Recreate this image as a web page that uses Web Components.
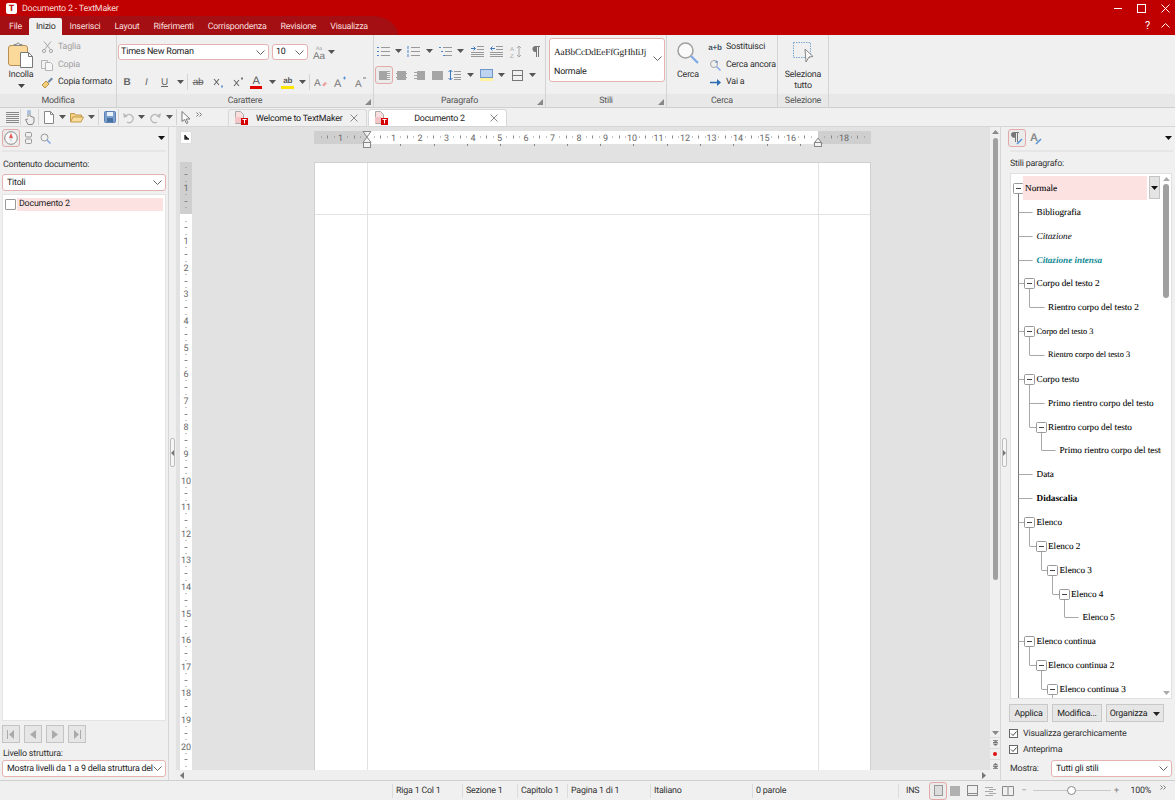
<!doctype html>
<html lang="it">
<head>
<meta charset="utf-8">
<title>Documento 2 - TextMaker</title>
<style>
  html, body { margin: 0; height: 100%; overflow: hidden; background: #f0f0f0; }
  tm-app { font-family: Roboto, "Liberation Sans", sans-serif; font-size: 8.900px; letter-spacing: -.2px; color: #333; text-rendering: geometricPrecision; }
</style>
</head>
<body>
<tm-app></tm-app>
<script>
const svg = (w, h, body, vb) => `<svg width="${w}" height="${h}" viewBox="${vb || `0 0 ${w} ${h}`}" fill="none" style="flex:none;display:block;overflow:visible">${body}</svg>`;
const drop = `<svg width="7" height="4" viewBox="0 0 7 4" style="flex:none;display:block"><path d="M0 0h7L3.500 4z" fill="#555"/></svg>`;
const lines = (x, ys, w, c) => ys.map(y => `<path d="M${x} ${y}.5h${w}" stroke="${c}"/>`).join("");
const dots = (x, ys, c) => ys.map(y => `<path d="M${x} ${y}.5h2" stroke="${c}"/>`).join("");

const ICON = {
  paste: svg(27, 26, `<rect x=".5" y="3.500" width="19" height="20" rx="2.500" fill="#fbd99a" stroke="#b98f55"/><path d="M6 3.500h8v-1h-2.500a1.500 1.500 0 0 0-3 0H6z" fill="#eee" stroke="#888"/><path d="M12.500 10.500h8l4 4v11h-12z" fill="#fff" stroke="#777"/><path d="M20.500 10.500v4h4" stroke="#777"/>`),
  cut: svg(11, 12, `<path d="M2 .5l6.500 8M9 .5L2.500 8.500" stroke="#a5a5a5"/><circle cx="2" cy="10" r="1.600" stroke="#a5a5a5"/><circle cx="9" cy="10" r="1.600" stroke="#a5a5a5"/>`),
  copy: svg(12, 12, `<path d="M.5 1.500h6v8h-6z" fill="#f2f2f2" stroke="#b5b5b5"/><path d="M4.500 3.500h5l2 2v6h-7z" fill="#f7f7f7" stroke="#b5b5b5"/>`),
  brush: svg(13, 13, `<path d="M1 9l4-4 3 3-4 4z" fill="#f3cf75" stroke="#b9914a"/><path d="M6.500 5.500l4-4 1.500 1.500-4 4z" fill="#6d88a8"/>`),
  case: svg(15, 15, `<text x="3" y="4.500" font-family="Liberation Sans" font-size="5" fill="#999">Aa</text><text x="0" y="14" font-family="Liberation Sans" font-size="10" fill="#777">Aa</text>`),
  sub: svg(12, 12, `<path d="M1 3l5 6M6 3L1 9" stroke="#666" stroke-width="1.100"/><path d="M8 9.500h2v2H8z" fill="#6d9ad0"/>`),
  sup: svg(12, 12, `<path d="M1 4l5 6M6 4L1 10" stroke="#666" stroke-width="1.100"/><path d="M8 1.500h2v2H8z" fill="#777"/>`),
  clear: svg(14, 12, `<text x="0" y="10" font-family="Liberation Sans" font-size="10" fill="#777">A</text><path d="M8 9l3-3 2 1.500-3 3z" fill="#eea0a0"/>`),
  grow: svg(13, 12, `<text x="0" y="11" font-family="Liberation Sans" font-size="11" fill="#777">A</text><path d="M9 2h3" stroke="#5a94d6"/><path d="M10.500.5v3" stroke="#5a94d6"/>`),
  shrink: svg(13, 12, `<text x="1" y="11" font-family="Liberation Sans" font-size="10" fill="#777">A</text><path d="M9 2h3" stroke="#777"/>`),
  bullets: svg(13, 11, dots(0, [1, 5, 9], "#4a86cc") + lines(4, [1, 5, 9], 9, "#999")),
  numbers: svg(13, 11, `<path d="M1 0v3M1 4v3M1 8v3" stroke="#4a86cc"/>` + lines(4, [1, 5, 9], 9, "#999")),
  multi: svg(13, 11, dots(0, [1], "#4a86cc") + dots(2, [5], "#4a86cc") + dots(4, [9], "#4a86cc") + lines(4, [1], 9, "#999") + lines(6, [5, 9], 7, "#999")),
  indent: svg(13, 11, `<path d="M0 2.500h4M2.500 .5l2 2-2 2" stroke="#3c78bf"/>` + lines(6, [0, 3], 7, "#999") + lines(0, [6, 8, 10], 13, "#999")),
  outdent: svg(13, 11, `<path d="M5 2.500H1M2.500 .5l-2 2 2 2" stroke="#3c78bf"/>` + lines(6, [0, 3], 7, "#999") + lines(0, [6, 8, 10], 13, "#999")),
  sort: svg(12, 13, `<text x="0" y="6" font-family="Liberation Sans" font-size="6" fill="#aaa">A</text><text x="0" y="13" font-family="Liberation Sans" font-size="6" fill="#aaa">Z</text><path d="M9 1v11M7 3l2-2 2 2M7 10l2 2 2-2" stroke="#aaa"/>`),
  pilcrow: svg(8, 11, `<path d="M3 0h5v1H7v10H6V1H5v10H4V6a3 3 0 0 1-1-6z" fill="#777"/>`),
  left: svg(11, 9, `<rect width="11" height="9" fill="#a5a5a5"/>` + lines(8, [1, 3, 5, 7], 3, "#ececec")),
  center: svg(11, 9, `<rect x="1" width="9" height="9" fill="#a5a5a5"/>` + lines(0, [2, 6], 11, "#a5a5a5")),
  right: svg(11, 9, `<rect x="3" width="8" height="9" fill="#a5a5a5"/>` + lines(0, [1, 4, 7], 4, "#a5a5a5")),
  justify: svg(11, 9, `<rect width="11" height="9" fill="#a5a5a5"/>`),
  spacing: svg(13, 12, `<path d="M2.500 1v10M.5 3l2-2 2 2M.5 9l2 2 2-2" stroke="#3c78bf"/>` + lines(6, [2, 5, 8, 10], 7, "#999")),
  shade: svg(13, 12, `<rect x=".5" y=".5" width="12" height="8" fill="#bcd4f0" stroke="#6e96c8"/><rect y="9" width="13" height="3" fill="#fff3a0"/>`),
  border: svg(11, 11, `<rect x=".5" y=".5" width="10" height="10" stroke="#777"/><path d="M0 5.500h11" stroke="#777"/>`),
  search: svg(22, 22, `<circle cx="8.500" cy="8.500" r="7.500" fill="#fafafa" stroke="#a0a0a0" stroke-width="1.500"/><path d="M14 14l7 7" stroke="#7ea9e6" stroke-width="2.200"/>`),
  again: svg(12, 12, `<circle cx="5" cy="5" r="3.500" stroke="#a5a5a5"/><path d="M7.500 7.500l4 4" stroke="#7ea9e6" stroke-width="1.500"/><path d="M7 1.500l1.500 1.500-2 .5" stroke="#4a86cc"/>`),
  goto: svg(11, 7, `<path d="M0 3.500h8" stroke="#2d6db3" stroke-width="1.500"/><path d="M7 0l4 3.500L7 7z" fill="#2d6db3"/>`),
  selectAll: svg(21, 22, `<rect x=".5" y=".5" width="17" height="15" stroke="#7fa7d4" stroke-dasharray="1.500 1"/><path d="M12 7l8 7.500-4 .5-3 5z" fill="#f6f6f6" stroke="#888"/>`),
  menu: svg(13, 11, lines(0, [0, 2, 4, 6, 8, 10], 13, "#888")),
  hand: svg(12, 15, `<path d="M4 7V2a1 1 0 0 1 2 0v4l4 1.500V12l-1.500 2.500H4L1.500 9.500 4 9" fill="#eee" stroke="#888"/><path d="M3 0h4v4H3z" fill="#a9c5ea" opacity=".8"/>`),
  doc: svg(10, 13, `<path d="M.5.5h6l3 3v9h-9z" fill="#fff" stroke="#888"/><path d="M6.500.5v3h3" stroke="#888"/>`),
  open: svg(14, 12, `<path d="M.5 11V2.500h4l1 1.500h6v2" fill="#f6cf80" stroke="#c29a4e"/><path d="M.5 11l2.500-5h10.500l-2.500 5z" fill="#f9dc9c" stroke="#c29a4e"/>`),
  save: svg(12, 12, `<rect x=".5" y=".5" width="11" height="11" rx="1" fill="#7d9fd0" stroke="#5a82b5"/><rect x="3" y="1" width="6" height="4" fill="#e8f0fa"/><rect x="3" y="7" width="6" height="4" fill="#46709f"/>`),
  undo: svg(11, 12, `<path d="M3 5a4 4 0 1 1 1 6" stroke="#b9b9b9" stroke-width="1.300"/><path d="M0 2l1 5 4-2z" fill="#b9b9b9"/>`),
  redo: svg(11, 12, `<path d="M8 5a4 4 0 1 0-1 6" stroke="#b9b9b9" stroke-width="1.300"/><path d="M11 2l-1 5-4-2z" fill="#b9b9b9"/>`),
  cursor: svg(10, 13, `<path d="M1 .5v10l2.500-2 2 4 1.500-.8-2-3.700H9z" fill="#fff" stroke="#777"/>`),
  more: svg(6, 5, `<path d="M.5.5l2 2-2 2M3.500.5l2 2-2 2" stroke="#777"/>`),
  tmdoc: svg(14, 14, `<path d="M.5.5h5l3 3v9h-8z" fill="#fbdede" stroke="#aaa"/><rect x="0" y="6" width="6" height="6" fill="#f6c4c4"/><rect x="6" y="7" width="7" height="7" fill="#d40000"/><path d="M7.500 8.500h4M9.500 8.500v4" stroke="#fff"/>`),
  close: svg(8, 8, `<path d="M.5.5l7 7M7.500.5l-7 7" stroke="#888"/>`),
  compass: svg(14, 14, `<circle cx="7" cy="7" r="6.300" stroke="#888" fill="#f8f8f8"/><path d="M7 2l2 5H5z" fill="#e25a5a"/><path d="M7 12l2-5H5z" fill="#ddd"/>`),
  panes: svg(7, 12, `<rect x=".5" y=".5" width="6" height="4.500" rx="1" stroke="#999"/><rect x=".5" y="7" width="6" height="4.500" rx="1" stroke="#999"/>`),
  lens: svg(11, 11, `<circle cx="4.500" cy="4.500" r="3.500" stroke="#999"/><path d="M7 7l3.500 3.500" stroke="#7ea9e6" stroke-width="1.500"/>`),
  parastyle: svg(12, 14, `<path d="M2 1h6v1H7v9H6V2H5v9H4V6.500A2.800 2.800 0 0 1 2 1z" fill="#777"/><path d="M6 13l5-5" stroke="#5a94d6" stroke-width="1.600"/>`),
  charstyle: svg(12, 14, `<text x="0" y="10" font-family="Liberation Sans" font-weight="700" font-size="11" fill="#888">A</text><path d="M6 13l5-5" stroke="#5a94d6" stroke-width="1.600"/>`),
  viewNormal: svg(9, 11, `<rect x=".5" y=".5" width="8" height="10" fill="#dcdcdc" stroke="#999"/>`),
  viewFull: svg(10, 10, `<rect width="10" height="10" fill="#b0b0b0"/>`),
  viewWeb: svg(11, 11, `<rect x=".5" y=".5" width="10" height="10" stroke="#888"/><path d="M0 8.500h11" stroke="#888"/>`),
  viewOutline: svg(11, 10, lines(0, [1, 5, 9], 8, "#aaa") + lines(4, [3, 7], 7, "#aaa")),
  viewBook: svg(12, 10, `<path d="M.5.5h5l.5 1 .5-1h5v9h-5l-.5.500-.5-.500h-5z" stroke="#888"/><path d="M6 1.500v8" stroke="#888"/>`),
  first: svg(8, 9, `<path d="M.5 0v9" stroke="#aaa"/><path d="M7 0v9L2 4.500z" fill="#aaa"/>`),
  prev: svg(6, 9, `<path d="M6 0v9L0 4.500z" fill="#aaa"/>`),
  next: svg(6, 9, `<path d="M0 0v9l6-4.500z" fill="#aaa"/>`),
  last: svg(8, 9, `<path d="M7.500 0v9" stroke="#aaa"/><path d="M1 0v9l5-4.500z" fill="#aaa"/>`),
  chevron: svg(9, 5, `<path d="M.5.5l4 4 4-4" stroke="#666"/>`),
};

// row of cells centred on page x positions, in flow
function cells(originX, items) {
  const cs = items.map(i => i[0]);
  let out = "";
  const firstHalf = cs.length > 1 ? (cs[1] - cs[0]) / 2 : 8;
  let left = cs[0] - firstHalf;
  const ml = left - originX;
  items.forEach((it, i) => {
    const right = i < cs.length - 1 ? (cs[i] + cs[i + 1]) / 2 : cs[i] + (cs[i] - left);
    const w = right - left;
    out += `<span class="cell ${it[2] || ""}" style="width:${w}px;${i == 0 ? `margin-left:${ml}px` : ""}">${it[1]}</span>`;
    left = right;
  });
  return out;
}
const SEP = `<i class="sep"></i>`;
const CELL_CSS = `
  .cell { flex: none; display: flex; align-items: center; justify-content: center; height: 100%; position: relative; }
  .sep { display: block; flex: none; width: 1px; height: 16px; background: #d4d4d4; }
  .on::before { content: ""; position: absolute; z-index: 0; left: 50%; top: 50%; width: 16px; height: 16px; margin: -9px 0 0 -9px; border: 1px solid #e3a9a9; border-radius: 3px; background: #ebebeb; }
  .on > svg { position: relative; }
`;

class TmBase extends HTMLElement {
  constructor() {
    super();
    this.attachShadow({ mode: "open" });
  }
  connectedCallback() {
    this.shadowRoot.innerHTML = `<style>${this.styles}</style>${this.markup}`;
  }
}

class TmApp extends TmBase {
  get styles() {
    return `:host { display: flex; flex-direction: column; width: 1175px; height: 800px; overflow: hidden; }
      .main { display: flex; height: 653px; border-top: 1px solid #d6d6d6; }`;
  }
  get markup() {
    return `<tm-titlebar></tm-titlebar><tm-menutabs></tm-menutabs><tm-ribbon></tm-ribbon><tm-quickbar></tm-quickbar>
      <div class="main"><tm-outline></tm-outline><tm-splitter dir="l"></tm-splitter><tm-docview></tm-docview><tm-splitter dir="r"></tm-splitter><tm-stylepanel></tm-stylepanel></div>
      <tm-status></tm-status>`;
  }
}

class TmTitlebar extends TmBase {
  get styles() {
    return `:host { display: flex; flex: none; height: 16px; background: #c00000; color: #f6dada; align-items: center; }
      .logo { width: 11px; height: 11px; margin-left: 6px; background: #fff; border-radius: 2px; color: #c00000; font: 700 9px/11px "Liberation Sans", sans-serif; text-align: center; }
      .t { margin-left: 5px; flex: 1; padding-top: 1px; }
      .win { display: flex; align-items: center; margin-right: 5px; gap: 15px; }`;
  }
  get markup() {
    return `<div class="logo">T</div><div class="t">Documento 2 - TextMaker</div>
      <div class="win">
        ${svg(8, 8, `<path d="M0 4.500h8" stroke="#fff"/>`)}
        ${svg(9, 9, `<rect x=".5" y=".5" width="8" height="8" stroke="#fff"/>`)}
        ${svg(9, 9, `<path d="M.5.5l8 8M8.500.5l-8 8" stroke="#fff"/>`)}
      </div>`;
  }
}

class TmMenutabs extends TmBase {
  get styles() {
    return `:host { display: flex; flex: none; height: 19px; background: #c00000; }
      .band { display: flex; width: 398px; box-sizing: border-box; padding-left: 2px; background: #a30f12; border-top-right-radius: 26px 19px; align-items: flex-end; color: #f8dcdc; letter-spacing: -.25px; }
      span { height: 17px; line-height: 18.500px; padding: 0 7px; }
      .on { background: #f0f0f0; color: #333; border-radius: 2px 2px 0 0; padding: 0 6.500px; margin: 0 .5px; }
      .right { margin-left: auto; display: flex; align-items: center; gap: 11px; padding-right: 5px; color: #fff; font-size: 11px; }`;
  }
  get markup() {
    const tabs = ["File", "Inizio", "Inserisci", "Layout", "Riferimenti", "Corrispondenza", "Revisione", "Visualizza"];
    return `<div class="band">${tabs.map(t => `<span class="${t == "Inizio" ? "on" : ""}">${t}</span>`).join("")}</div>
      <div class="right">?${svg(9, 5, `<path d="M.5 4.500l4-4 4 4" stroke="#fff"/>`)}</div>`;
  }
}

class TmGroup extends TmBase {
  get styles() {
    return `:host { display: flex; flex-direction: column; flex: none; box-sizing: border-box; height: 72px; border-right: 1px solid #d4d4d4; }
      .body { height: 59px; }
      .label { height: 13px; line-height: 15px; text-align: center; color: #555; position: relative; background: #e8e8e8; }
      svg { position: absolute; right: 2px; bottom: 2px; }`;
  }
  get markup() {
    const launcher = this.hasAttribute("launcher") ? `<svg width="6" height="6"><path d="M6 0v6H0z" fill="#888"/></svg>` : "";
    return `<div class="body"><slot></slot></div><div class="label">${this.getAttribute("label")}${launcher}</div>`;
  }
}

class TmSelect extends TmBase {
  get styles() {
    return `:host { display: flex; box-sizing: border-box; height: 17px; align-items: center; justify-content: space-between; background: #fff; border: 1px solid #e6b3b3; border-radius: 3px; padding: 0 3px 0 4px; color: #222; overflow: hidden; white-space: nowrap; flex: none; }`;
  }
  get markup() {
    return `<span>${this.getAttribute("value")}</span>${ICON.chevron}`;
  }
}

class TmRibbon extends TmBase {
  get styles() {
    return `:host { display: flex; flex: none; height: 73px; background: #f0f0f0; border-bottom: 1px solid #cfcfcf; box-sizing: border-box; }
      ${CELL_CSS}
      .rest { flex: 1; display: flex; flex-direction: column; justify-content: flex-end; }
      .rest i { height: 13px; background: #e8e8e8; display: block; }
      .big { display: flex; flex-direction: column; align-items: center; text-align: center; line-height: 11px; flex: none; }
      .col { display: flex; flex-direction: column; flex: none; }
      .hrow { display: flex; height: 100%; }
      .small { display: flex; align-items: center; height: 17.500px; white-space: nowrap; }
      .small .ic { width: 12px; display: flex; justify-content: center; margin-right: 5px; }
      .dis { color: #a0a0a0; }
      .row { display: flex; align-items: center; height: 20px; }
      b, em, u, s { font-family: "Liberation Sans", sans-serif; font-size: 10px; color: #666; }
      .colA { display: flex; flex-direction: column; align-items: center; font-family: "Liberation Sans"; font-size: 11px; line-height: 10px; color: #555; }
      .colA i { display: block; width: 12px; height: 3px; }
      .gal { box-sizing: border-box; width: 116px; height: 44px; margin: 3px 0 0 3px; background: #fff; border: 1px solid #e6b3b3; border-radius: 3px; display: flex; align-items: center; position: relative; padding: 3px 0 0 4px; color: #222; }
      .gal div { flex: 1; }
      .sample { font: 9.300px "Liberation Serif", serif; white-space: nowrap; height: 21px; line-height: 15px; }`;
  }
  get markup() {
    return `
    <tm-group label="Modifica" style="width:117px">
      <div class="hrow">
        <div class="big" style="width:34px;margin-left:4px;padding-top:7px">${ICON.paste}<div style="margin-top:2px">Incolla</div><div style="margin-top:3px">${drop.replace("#555", "#444")}</div></div>
        <div class="col" style="margin:3.500px 0 0 3px">
          <div class="small dis"><span class="ic">${ICON.cut}</span>Taglia</div>
          <div class="small dis"><span class="ic">${ICON.copy}</span>Copia</div>
          <div class="small"><span class="ic">${ICON.brush}</span>Copia formato</div>
        </div>
      </div>
    </tm-group>
    <tm-group label="Carattere" launcher style="width:257px">
      <div class="row" style="margin-top:7px;height:20px">
        <tm-select value="Times New Roman" style="width:151px;height:16px;margin-left:1px;font-size:9px;padding-left:2px"></tm-select>
        <tm-select value="10" style="width:36px;height:16px;margin-left:3px;padding-left:3px"></tm-select>
        <div class="row">${cells(309, [[321, ICON.case], [332, drop]])}</div>
      </div>
      <div class="row" style="margin-top:10px;height:20px">
        ${cells(117, [[127, "<b>B</b>"], [146, "<em>I</em>"], [166, "<u>U</u>"], [180, drop]])}${SEP}
        ${cells(189, [[199, `<s>ab</s>`], [220, ICON.sub], [240, ICON.sup], [258, `<span class="colA">A<i style="background:#e00000"></i></span>`], [272, drop], [290, `<span class="colA" style="font-size:8px;font-weight:700">ab<i style="background:#ffe600;width:13px"></i></span>`], [303, drop]])}${SEP}
        ${cells(312, [[323, ICON.clear], [343, ICON.grow], [363, ICON.shrink]])}
      </div>
    </tm-group>
    <tm-group label="Paragrafo" launcher style="width:172px">
      <div class="row" style="margin-top:6px;height:20px">
        ${cells(374, [[383, ICON.bullets], [398, drop], [414, ICON.numbers], [429, drop], [446, ICON.multi], [459, drop], [477, ICON.indent], [496, ICON.outdent], [516, ICON.sort], [536, ICON.pilcrow]])}
      </div>
      <div class="row" style="margin-top:4px;height:20px">
        ${cells(374, [[384, ICON.left, "on"], [402, ICON.center], [419, ICON.right], [437, ICON.justify], [456, ICON.spacing], [470, drop], [487, ICON.shade], [501, drop], [518, ICON.border], [532, drop]])}
      </div>
    </tm-group>
    <tm-group label="Stili" launcher style="width:121px">
      <div class="gal"><div><div class="sample">AaBbCcDdEeFfGgHhIiJj</div><div>Normale</div></div><span style="margin:-6px 2px 0 0">${ICON.chevron}</span></div>
    </tm-group>
    <tm-group label="Cerca" style="width:111px">
      <div class="hrow">
        <div class="big" style="width:32px;margin-left:5px;padding-top:7px">${ICON.search}<div style="margin-top:6px">Cerca</div></div>
        <div class="col" style="margin:3.500px 0 0 5px">
          <div class="small"><span class="ic" style="font:700 8px 'Liberation Sans';color:#456">a+b</span>Sostituisci</div>
          <div class="small"><span class="ic">${ICON.again}</span>Cerca ancora</div>
          <div class="small"><span class="ic">${ICON.goto}</span>Vai a</div>
        </div>
      </div>
    </tm-group>
    <tm-group label="Selezione" style="width:51px">
      <div class="big" style="padding-top:7px">${ICON.selectAll}<div style="margin-top:6px">Seleziona<br>tutto</div></div>
    </tm-group>
    <div class="rest"><i></i></div>`;
  }
}

class TmQuickbar extends TmBase {
  get styles() {
    return `:host { display: flex; flex: none; height: 18px; background: #f0f0f0; align-items: stretch; }
      ${CELL_CSS}
      .tools { display: flex; width: 228px; flex: none; align-items: center; height: 100%; }
      tm-doctab + tm-doctab { margin-left: 1px; }
      .tabs { display: flex; align-items: flex-end; }`;
  }
  get markup() {
    return `<div class="tools">
      ${cells(0, [[12, ICON.menu]])}${SEP}
      ${cells(25, [[34, ICON.hand]])}${SEP}
      ${cells(46, [[56, ICON.doc], [69, drop], [84, ICON.open], [98, drop]])}${SEP}
      ${cells(107, [[118, ICON.save]])}${SEP}
      ${cells(130, [[139, ICON.undo], [152, drop], [166, ICON.redo], [180, drop]])}${SEP}
      ${cells(190, [[199, ICON.cursor], [212, `<span style="margin-top:-6px">${ICON.more}</span>`]])}
    </div>
    <div class="tabs"><tm-doctab text="Welcome to TextMaker" style="width:139px;background:#f0f0f0"></tm-doctab><tm-doctab text="Documento 2" active style="width:139px"></tm-doctab></div>`;
  }
}

class TmDoctab extends TmBase {
  get styles() {
    return `:host { display: flex; box-sizing: border-box; height: 17px; align-items: center; padding: 0 8px 0 6px; background: #fff; border: 1px solid #d8d8d8; border-bottom: 0; border-radius: 3px 3px 0 0; color: #222; }
      .x { flex: 1; padding: 2px 0 0 7px; white-space: nowrap; }
      :host([active]) .x { text-align: center; padding-left: 0; }`;
  }
  get markup() {
    return `${ICON.tmdoc}<span class="x">${this.getAttribute("text")}</span>${ICON.close}`;
  }
}

class TmSplitter extends TmBase {
  get styles() {
    return `:host { display: flex; flex: none; width: 7px; align-items: center; justify-content: center; background: #f0f0f0; border-left: 1px solid #d6d6d6; }
      div { width: 3px; height: 27px; background: #f6f6f6; border: 1px solid #bdbdbd; border-radius: 2px; display: flex; align-items: center; justify-content: center; margin-top: -2px; }`;
  }
  get markup() {
    const d = this.getAttribute("dir") == "l" ? "M3 0v6L0 3z" : "M0 0v6l3-3z";
    return `<div><svg width="3" height="6"><path d="${d}" fill="#777"/></svg></div>`;
  }
}

const PANEL_CSS = `
  :host { display: flex; flex-direction: column; flex: none; box-sizing: border-box; background: #f0f0f0; height: 653px; }
  ${CELL_CSS}
  .icons { display: flex; align-items: center; flex: none; height: 22px; }
  .rule { flex: none; height: 2px; background: #e6e6e6; margin-top: 1px; }
  .lab { flex: none; height: 14px; line-height: 17px; margin-top: 5px; white-space: nowrap; }
`;

class TmOutline extends TmBase {
  get styles() {
    return `${PANEL_CSS}
      :host { width: 168px; }
      .list { flex: 1; margin: 3px 2px 0; background: #fff; border: 1px solid #e4e4e4; padding: 3px 2px; }
      .item { display: flex; align-items: center; height: 13px; color: #222; }
      .chk { width: 9px; height: 9px; border: 1px solid #999; border-radius: 1px; background: #fff; flex: none; }
      .hl { flex: 1; background: #fde2e2; height: 13px; line-height: 13px; margin-left: 1px; padding-left: 2px; }
      .nav { display: flex; gap: 4px; flex: none; margin: 4px 0 0 2px; }
      .nav span { box-sizing: border-box; width: 18px; height: 18px; border: 1px solid #c4c4c4; background: #e6e6e6; display: flex; align-items: center; justify-content: center; }`;
  }
  get markup() {
    return `<div class="icons">${cells(0, [[11, ICON.compass, "on"], [28, ICON.panes], [45, ICON.lens]])}<span style="margin-left:auto;margin-right:3px">${drop.replace("#555", "#111")}</span></div>
      <div class="rule" style="margin-left:2px;margin-right:2px"></div>
      <div class="lab" style="margin-left:3px">Contenuto documento:</div>
      <tm-select value="Titoli" style="margin:3px 2px 0"></tm-select>
      <div class="list"><div class="item"><span class="chk"></span><span class="hl">Documento 2</span></div></div>
      <div class="nav"><span>${ICON.first}</span><span>${ICON.prev}</span><span>${ICON.next}</span><span>${ICON.last}</span></div>
      <div class="lab" style="margin:3px 0 0 3px">Livello struttura:</div>
      <tm-select value="Mostra livelli da 1 a 9 della struttura del" style="margin:0 2px 3px"></tm-select>`;
  }
}

class TmDocview extends TmBase {
  get styles() {
    return `:host { display: flex; flex-direction: column; flex: none; width: 824px; height: 653px; background: #e2e2e2; }
      .top { display: flex; flex: 1; min-height: 0; }
      .canvas { flex: 1; display: flex; flex-direction: column; min-width: 0; overflow: hidden; }
      .rulerrow { display: flex; flex: none; height: 35px; padding-top: 4px; box-sizing: border-box; }
      .corner { box-sizing: border-box; width: 12px; height: 13px; margin-left: 4px; background: #fff; border: 1px solid #ddd; display: flex; align-items: center; justify-content: center; }
      tm-hruler { margin-left: 122px; }
      .pagerow { display: flex; flex: 1; min-height: 0; overflow: hidden; }
      tm-vruler { margin-left: 4px; }
      tm-page { margin-left: 122px; }
      .vbar { flex: none; width: 10px; background: #efefef; display: flex; flex-direction: column; align-items: center; }
      .thumb { width: 5px; height: 442px; background: #a0a0a0; border-radius: 3px; margin-top: 4px; flex: none; }
      .mini { width: 10px; height: 11px; display: flex; align-items: center; justify-content: center; border-top: 1px solid #ddd; box-sizing: border-box; flex: none; }
      .hbar { flex: none; height: 10px; background: #efefef; display: flex; align-items: center; justify-content: space-between; padding: 0 14px 0 4px; }`;
  }
  get markup() {
    const up = `<svg width="7" height="4" style="margin-top:3px;flex:none"><path d="M0 4h7L3.500 0z" fill="#888"/></svg>`;
    const down = `<svg width="7" height="4" style="margin-top:auto;margin-bottom:2px;flex:none"><path d="M0 0h7L3.500 4z" fill="#888"/></svg>`;
    const pg = (flip) => `<svg width="5" height="7" style="${flip ? "transform:scaleY(-1)" : ""}"><path d="M0 .5h5M0 3l2.500-2L5 3z" stroke="#777" stroke-width=".8" fill="#777"/><path d="M0 4l2.500 2L5 4z" fill="#777"/></svg>`;
    return `<div class="top">
      <div class="canvas">
        <div class="rulerrow"><div class="corner"><svg width="5" height="5"><path d="M1 0v4h4" stroke="#333" stroke-width="1.500"/></svg></div><tm-hruler></tm-hruler></div>
        <div class="pagerow"><tm-vruler></tm-vruler><tm-page></tm-page></div>
      </div>
      <div class="vbar">${up}<div class="thumb"></div>${down}
        <div class="mini">${pg(false)}</div>
        <div class="mini"><svg width="4" height="4"><circle cx="2" cy="2" r="2" fill="#e01010"/></svg></div>
        <div class="mini">${pg(true)}</div>
      </div>
    </div>
    <div class="hbar"><svg width="4" height="7"><path d="M4 0v7L0 3.500z" fill="#777"/></svg><svg width="4" height="7"><path d="M0 0v7l4-3.500z" fill="#777"/></svg></div>`;
  }
}

class TmHruler extends TmBase {
  get styles() {
    return `:host { display: block; flex: none; width: 557px; height: 18px; }
      svg { display: block; overflow: visible; }
      text { font: 9px Roboto, sans-serif; letter-spacing: 0; fill: #666; text-anchor: middle; }`;
  }
  get markup() {
    const u = 26.5, z = 53;
    let s = `<rect width="557" height="13" fill="#cfcfcf"/><rect x="${z}" width="451" height="13" fill="#fff"/>`;
    for (let n = -2; n <= 19; n++) {
      const x = z + n * u;
      if (n > -2 && n < 19 && n != 0 && n != 17) s += `<text x="${x}" y="10">${Math.abs(n)}</text>`;
      [[.25, 1], [.5, 3], [.75, 1]].forEach(([f, h]) => {
        const tx = x + f * u;
        if (tx > 0 && tx < 557) s += `<path d="M${Math.round(tx)}.5 ${6 - h / 2}v${h}" stroke="#888"/>`;
      });
    }
    for (let x = z + 33.3; x < 504; x += 33.3) s += `<path d="M${Math.round(x)}.5 13v2" stroke="#888"/>`;
    const mark = x => `<path d="M${x - 4} 0.5h8l-4 5.500zM${x - 4} 11.500h8l-4-5.500z" fill="#f2f2f2" stroke="#888"/><rect x="${x - 3.500}" y="11.500" width="7" height="5" fill="#f2f2f2" stroke="#888"/>`;
    s += mark(z);
    s += `<path d="M${z + 451 - 4} 12.500h8l-4-5.500z" fill="#f2f2f2" stroke="#888"/><rect x="${z + 451 - 3.500}" y="11.500" width="7" height="4" fill="#f2f2f2" stroke="#888"/>`;
    return `<svg width="557" height="18">${s}</svg>`;
  }
}

class TmVruler extends TmBase {
  get styles() {
    return `:host { display: block; flex: none; width: 12px; height: 608px; overflow: hidden; }
      svg { display: block; }
      text { font: 9px Roboto, sans-serif; letter-spacing: 0; fill: #666; text-anchor: middle; }`;
  }
  get markup() {
    const u = 26.6, z = 52;
    let s = `<rect width="12" height="608" fill="#fff"/><rect width="12" height="${z}" fill="#cfcfcf"/>`;
    for (let n = -2; n <= 22; n++) {
      const y = z + n * u;
      if (n > -2 && n != 0 && n < 21) s += `<text x="6" y="${y + 3.500}">${Math.abs(n)}</text>`;
      [[.25, 1], [.5, 3], [.75, 1]].forEach(([f, h]) => {
        const ty = Math.round(y + f * u);
        if (ty > 0) s += `<path d="M${6 - h / 2} ${ty}.5h${h}" stroke="#888"/>`;
      });
    }
    return `<svg width="12" height="608">${s}</svg>`;
  }
}

class TmPage extends TmBase {
  get styles() {
    return `:host { display: block; flex: none; box-sizing: border-box; width: 557px; height: 700px; background: #fff; border: 1px solid #d0d0d0; }
      .head { height: 51px; border-bottom: 1px solid #e2e2e2; display: flex; }
      .body { height: 100%; display: flex; }
      .m { width: 52px; flex: none; border-right: 1px solid #e2e2e2; }
      .c { width: 450px; flex: none; border-right: 1px solid #e2e2e2; }
      .wrap { display: grid; height: 100%; }
      .wrap > * { grid-area: 1 / 1; }`;
  }
  get markup() {
    return `<div class="wrap"><div class="head"></div><div class="body"><div class="m"></div><div class="c"></div></div></div>`;
  }
}

const STYLES = [
  { t: "Normale", l: 0, box: 1 },
  { t: "Bibliografia", l: 1 },
  { t: "Citazione", l: 1, s: "font-style:italic;-webkit-text-stroke:0" },
  { t: "Citazione intensa", l: 1, s: "font-style:italic;font-weight:700;color:#0f8a96;-webkit-text-stroke:0" },
  { t: "Corpo del testo 2", l: 1, box: 1 },
  { t: "Rientro corpo del testo 2", l: 2 },
  { t: "Corpo del testo 3", l: 1, box: 1, s: "font-size:8.300px" },
  { t: "Rientro corpo del testo 3", l: 2, s: "font-size:8.300px" },
  { t: "Corpo testo", l: 1, box: 1 },
  { t: "Primo rientro corpo del testo", l: 2 },
  { t: "Rientro corpo del testo", l: 2, box: 1 },
  { t: "Primo rientro corpo del testo", l: 3 },
  { t: "Data", l: 1 },
  { t: "Didascalia", l: 1, s: "font-weight:700;-webkit-text-stroke:0" },
  { t: "Elenco", l: 1, box: 1 },
  { t: "Elenco 2", l: 2, box: 1 },
  { t: "Elenco 3", l: 3, box: 1 },
  { t: "Elenco 4", l: 4, box: 1 },
  { t: "Elenco 5", l: 5 },
  { t: "Elenco continua", l: 1, box: 1 },
  { t: "Elenco continua 2", l: 2, box: 1 },
  { t: "Elenco continua 3", l: 3, box: 1 },
];

class TmStyleTree extends TmBase {
  get styles() {
    return `:host { display: flex; flex: 1; min-height: 0; box-sizing: border-box; background: #fff; border: 1px solid #e0e0e0; margin: 3px 3px 0 2px; overflow: hidden; }
      .rows { flex: 1; min-width: 0; overflow: hidden; padding-top: 2px; }
      .row { display: flex; align-items: center; height: 23.860px; font: 9.200px "Liberation Serif", serif; letter-spacing: 0; -webkit-text-stroke: .08px #000; color: #000; white-space: nowrap; position: relative; }
      .row svg { flex: none; overflow: visible; }
      .first .txt { flex: 1; align-self: stretch; display: flex; align-items: center; background: #fde2e2; margin-right: 2px; padding-left: 2px; }
      .first { padding-right: 1px; }
      .dd { flex: none; box-sizing: border-box; width: 11px; height: 23px; background: #e4e4e4; border: 1px solid #c4c4c4; display: flex; align-items: center; justify-content: center; }
      .bar { flex: none; width: 10px; display: flex; flex-direction: column; align-items: center; }
      .thumb { width: 6px; height: 114px; margin-top: 3px; background: #a0a0a0; border-radius: 3px; }`;
  }
  get markup() {
    const H = 24, C = d => Math.floor(7 + 11.5 * d) + .5;
    const all = STYLES.concat([{ l: 4 }, { l: 1 }]);
    const cont = (i, d) => {
      for (let j = i + 1; j < all.length; j++) {
        if (all[j].l <= d) return false;
        if (all[j].l == d + 1) return true;
      }
      return false;
    };
    const rows = STYLES.map((r, i) => {
      const L = r.l, mid = 12;
      let p = "";
      for (let d = 0; d < L - 1; d++) if (cont(i, d)) p += `<path d="M${C(d)} 0V${H}" ${d == 0 ? 'stroke="#777"' : ""}/>`;
      if (L > 0) {
        p += `<path d="M${C(L - 1)} 0V${cont(i, L - 1) ? H : mid}" ${L == 1 ? 'stroke="#777"' : ""}/>`;
        p += `<path d="M${C(L - 1)} ${mid + .5}H${r.box ? C(L) - 5 : C(L) + 3}"/>`;
      }
      if (r.box) {
        p += `<path d="M${C(L)} ${mid + 5}V${H}" ${L == 0 ? 'stroke="#777"' : ""}/>`;
        p += `<rect x="${C(L) - 5}" y="${mid - 4.5}" width="10" height="10" fill="#fff" rx="1" stroke="#999"/><path d="M${C(L) - 2.500} ${mid + .5}h5" stroke="#444"/>`;
      }
      const w = L == 0 ? 12 : 14 + 11.5 * L;
      const g = `<svg width="${w}" height="24" style="align-self:flex-start" fill="none" stroke="#a8a8a8">${p}</svg>`;
      const dd = i == 0 ? `<div class="dd">${drop.replace("#555", "#111")}</div>` : "";
      return `<div class="row ${i == 0 ? "first" : ""}">${g}<span class="txt" style="${r.s || ""}">${r.t}</span>${dd}</div>`;
    }).join("");
    return `<div class="rows">${rows}</div>
      <div class="bar"><svg width="7" height="4" style="margin-top:3px;flex:none"><path d="M0 4h7L3.500 0z" fill="#aaa"/></svg><div class="thumb"></div><svg width="7" height="4" style="margin-top:auto;margin-bottom:3px;flex:none"><path d="M0 0h7L3.500 4z" fill="#aaa"/></svg></div>`;
  }
}

class TmCheck extends TmBase {
  get styles() {
    return `:host { display: flex; flex: none; height: 16px; align-items: center; gap: 5px; margin-left: 1px; white-space: nowrap; }
      span { padding-top: 1px; }`;
  }
  get markup() {
    return `${svg(9, 9, `<rect x=".5" y=".5" width="8" height="8" fill="#fff" stroke="#666"/><path d="M2 4.500l2 2 3.500-4" stroke="#444"/>`)}<span>${this.getAttribute("text")}</span>`;
  }
}

class TmStylepanel extends TmBase {
  get styles() {
    return `${PANEL_CSS}
      :host { width: 167px; }
      .btns { display: flex; flex: none; gap: 4px; margin: 5px 0 0 1px; height: 18px; }
      .btns span { box-sizing: border-box; display: flex; align-items: center; justify-content: center; gap: 6px; height: 18px; padding-top: 1px; border: 1px solid #c8c8c8; background: #e6e6e6; color: #222; }
      .show { display: flex; flex: none; align-items: center; height: 17px; margin: 3px 0 3px 2px; }
      .show span { width: 41px; }`;
  }
  get markup() {
    return `<div class="icons">${cells(0, [[9, ICON.parastyle, "on"], [28, ICON.charstyle]])}<span style="margin-left:auto;margin-right:3px">${drop.replace("#555", "#111")}</span></div>
      <div class="rule" style="margin-left:2px;margin-right:2px"></div>
      <div class="lab" style="margin:4px 0 0 2px">Stili paragrafo:</div>
      <tm-styletree></tm-styletree>
      <div class="btns"><span style="width:39px">Applica</span><span style="width:50px">Modifica...</span><span style="width:58px">Organizza ${drop.replace("#555", "#222")}</span></div>
      <tm-check text="Visualizza gerarchicamente" style="margin-top:3px"></tm-check>
      <tm-check text="Anteprima"></tm-check>
      <div class="show"><span>Mostra:</span><tm-select value="Tutti gli stili" style="width:121px"></tm-select></div>`;
  }
}

class TmStatus extends TmBase {
  get styles() {
    return `:host { display: flex; flex: none; height: 20px; box-sizing: border-box; background: #f0f0f0; border-top: 1px solid #d0d0d0; align-items: center; padding-left: 392px; white-space: nowrap; color: #333; }
      ${CELL_CSS}
      .f { box-sizing: border-box; flex: none; height: 14px; line-height: 14px; padding-left: 3px; border-left: 1px solid #dcdcdc; }
      .views { display: flex; align-items: center; height: 100%; }
      .track { flex: none; display: block; width: 78px; height: 1px; background: #c8c8c8; position: relative; }
      .knob { position: absolute; left: 34px; top: -4px; box-sizing: border-box; width: 9px; height: 9px; border-radius: 50%; background: #fff; border: 1px solid #888; }`;
  }
  get markup() {
    const f = (t, w) => `<span class="f" style="width:${w}px">${t}</span>`;
    return `${f("Riga 1 Col 1", 70)}${f("Sezione 1", 55)}${f("Capitolo 1", 50)}${f("Pagina 1 di 1", 83)}${f("Italiano", 102)}${f("0 parole", 146)}
      <span class="f" style="width:27px;padding-left:7px">INS</span>
      <div class="views">${cells(925, [[938, ICON.viewNormal, "on"], [955, ICON.viewFull], [972, ICON.viewWeb], [990, ICON.viewOutline], [1009, ICON.viewBook], [1024, `<span style="color:#888">−</span>`]])}
      <span class="track" style="margin-left:1px"><span class="knob"></span></span>
      ${cells(1110, [[1116, `<span style="color:#888">+</span>`]])}
      <span style="margin-left:6px">100%</span><span style="margin:-6px 0 0 9px">${ICON.more}</span></div>`;
  }
}

customElements.define("tm-app", TmApp);
customElements.define("tm-titlebar", TmTitlebar);
customElements.define("tm-menutabs", TmMenutabs);
customElements.define("tm-group", TmGroup);
customElements.define("tm-select", TmSelect);
customElements.define("tm-ribbon", TmRibbon);
customElements.define("tm-quickbar", TmQuickbar);
customElements.define("tm-doctab", TmDoctab);
customElements.define("tm-splitter", TmSplitter);
customElements.define("tm-outline", TmOutline);
customElements.define("tm-docview", TmDocview);
customElements.define("tm-hruler", TmHruler);
customElements.define("tm-vruler", TmVruler);
customElements.define("tm-page", TmPage);
customElements.define("tm-styletree", TmStyleTree);
customElements.define("tm-check", TmCheck);
customElements.define("tm-stylepanel", TmStylepanel);
customElements.define("tm-status", TmStatus);
</script>
</body>
</html>
